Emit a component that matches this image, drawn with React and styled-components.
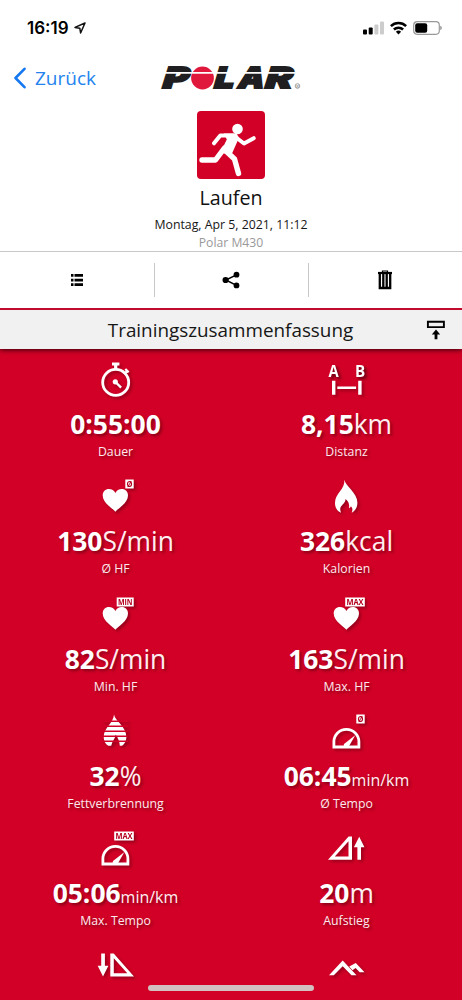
import React from 'react'
import styled, { createGlobalStyle } from 'styled-components'

const GlobalStyle = createGlobalStyle`
  * {
    box-sizing: border-box;
  }
  body {
    margin: 0;
    background-color: white;
    font-family: "Open Sans", "Noto Sans", sans-serif;
  }
  svg {
    display: block;
  }
`;

const Screen = styled.div`
  position: relative;
  width: 462px;
  height: 1000px;
  overflow: hidden;
  display: grid;
  grid-template-columns: 100%;
  grid-template-rows: 55px 46px 150px 57px 41px 1fr;
`;

const StatusBar = styled.div`
  padding: 0 20px 0 27px;
  display: flex;
  justify-content: space-between;
  align-items: center;
  .time{
    display: flex;
    align-items: center;
    gap: 5px;
    font-family: Inter, sans-serif;
    font-size: 17px;
    font-weight: 600;
    color: black;
  }
  .signals{
    display: flex;
    align-items: center;
    gap: 6px;
  }
`;

const NavBar = styled.div`
  padding: 0 13px;
  display: grid;
  grid-template-columns: 146px 144px 1fr;
  align-items: center;
`;

const BackButton = styled.button`
  display: flex;
  align-items: center;
  gap: 9px;
  padding: 0;
  border: none;
  background: none;
  font-family: inherit;
  font-size: 19px;
  line-height: 24px;
  color: #2483ee;
  cursor: pointer;
`;

const Activity = styled.div`
  padding-top: 10px;
  display: flex;
  flex-direction: column;
  align-items: center;
  .tile{
    width: 68px;
    height: 68px;
    border-radius: 4px;
    background-color: #d20026;
  }
  h1{
    margin: 5px 0 0;
    font-size: 19.7px;
    font-weight: 400;
    line-height: 28px;
    color: #111;
  }
  .date{
    margin-top: 4px;
    font-size: 12.3px;
    line-height: 18px;
    color: #161616;
  }
  .device{
    font-size: 12.2px;
    line-height: 18px;
    color: #999;
  }
`;

const Toolbar = styled.div`
  border-top: 1px solid #c8c8c8;
  display: grid;
  grid-template-columns: repeat(3, 1fr);
  align-items: center;
`;

const ToolButton = styled.button`
  height: 34px;
  padding: 0;
  padding-right: ${({ $divided }) => $divided ? "2px" : "0"};
  border: none;
  border-left: ${({ $divided }) => $divided ? "1px solid #c8c8c8" : "none"};
  background: none;
  display: flex;
  justify-content: center;
  align-items: center;
  cursor: pointer;
`;

const SectionHeader = styled.div`
  position: relative;
  padding: 0 16px 0 53px;
  border-top: 2px solid #c20a2c;
  background-color: #f1f1f1;
  box-shadow: 0 1px 5px rgba(0,0,0,0.75);
  clip-path: inset(0 0 -12px 0);
  display: grid;
  grid-template-columns: 1fr 38px;
  align-items: center;
  h2{
    margin: 0;
    font-size: 18.85px;
    font-weight: 400;
    line-height: 26px;
    text-align: center;
    color: #161616;
  }
  svg{
    justify-self: end;
  }
`;

const Summary = styled.div`
  min-height: 0;
  padding-top: 11px;
  background-color: #d20026;
  display: grid;
  grid-template-columns: 1fr 1fr;
  grid-auto-rows: 117.3px;
`;

const Cell = styled.div`
  display: flex;
  flex-direction: column;
  align-items: center;
  color: white;
  text-shadow: 2px 2px 3px rgba(0,0,0,0.35);
  svg{
    flex-shrink: 0;
    margin-right: 1px;
    overflow: visible;
    filter: drop-shadow(2px 2px 1.5px rgba(0,0,0,0.28));
  }
`;

const Value = styled.div`
  height: 36px;
  margin-top: 6px;
  font-size: 26.4px;
  line-height: 36px;
  font-weight: 700;
  white-space: nowrap;
  span{
    font-size: ${({ $small }) => $small ? "16px" : "26.4px"};
    line-height: 1;
    font-weight: 400;
    color: #ffeef0;
  }
`;

const Label = styled.div`
  font-size: 12.3px;
  line-height: 19px;
  color: #ffe9ec;
`;

const HomeIndicator = styled.div`
  position: absolute;
  left: 148px;
  bottom: 9px;
  width: 166px;
  height: 6px;
  border-radius: 3px;
  background-color: #d3c0c1;
`;

const Badge = ({ text, x = 32.3, width = 8.4 }) => (
  <g>
    <rect x={x} y="2.5" width={width} height="9" fill="#fff" />
    <text x={x + width / 2} y="10" fontSize="8" fontWeight="700" textAnchor="middle" fill="#b5001f"
      textLength={width - 2.4} lengthAdjust="spacingAndGlyphs" style={{ textShadow: "none" }}>{text}</text>
  </g>
)

const badges = {
  avg: <Badge text="Ø" />,
  min: <Badge text="MIN" x={23.7} width={17} />,
  max: <Badge text="MAX" x={21.2} width={19.6} />,
}

const flame = "M20.3 2.8C21.2 9 33.4 15.8 33.4 25.6c0 4.8-2.2 8.6-5.7 10.1 1.3-3.3.7-5-.8-6.4-.4 1.1-1 1.7-1.8 1.9.5-4.3-.7-7-3.6-9.2.1 4.900-5.300 5.900-5.300 10.300 0 1.300.400 2.400.900 3.400-3.800-1.400-6.100-5-6.100-9.600C11 16 21.400 12.500 20.300 2.800Z"

const icons = {
  duration: (
    <g fill="none" stroke="#fff">
      <circle cx="22.7" cy="22.4" r="13" strokeWidth="2.8" />
      <path d="M19 4h7.4M22.7 4v6" strokeWidth="3.2" />
      <path d="M31.2 14l3.400-3.400M32.300 9l3.300 3.300" strokeWidth="2.400" />
      <path d="M22.5 22l5.600 5.600" strokeWidth="2.400" />
      <circle cx="22.3" cy="21.800" r="2.600" fill="#fff" stroke="none" />
    </g>
  ),
  distance: (
    <g fill="#fff">
      <text x="9.6" y="17.4" fontSize="16" fontWeight="700" textAnchor="middle" textLength="10.2" lengthAdjust="spacingAndGlyphs">A</text>
      <text x="36.2" y="17.4" fontSize="16" fontWeight="700" textAnchor="middle" textLength="10.2" lengthAdjust="spacingAndGlyphs">B</text>
      <path d="M8 20.700h3.400v14H8zM34.200 20.700h3.400v14h-3.400zM13.300 26.500h18.800v2.600H13.300z" />
    </g>
  ),
  heart: (
    <path fill="#fff" d="M22.400 34.700C20 31.500 9.700 26 9.700 18.400c0-3.700 2.700-6.400 6.200-6.400 3 0 5.200 1.500 6.500 4 1.300-2.500 3.500-4 6.400-4 3.500 0 6.200 2.700 6.200 6.400 0 7.600-10.200 13.100-12.600 16.300Z" />
  ),
  calories: <path fill="#fff" d={flame} />,
  fat: (
    <g>
      <path fill="#fff" d="M21 2.400C22 9 33.400 14.500 33.400 25c0 4-1.800 7-4.300 8.800h-2.300c-.2-4-1.300-7-4.100-11-.8 4.500-3.600 6.500-4.500 11h-3C12.400 32 10.700 29 10.700 25 10.700 15.500 20.600 11 21 2.400Z" />
      <path stroke="#d20026" strokeWidth="1.600" d="M9 9.200h26M9 14.200h26M9 19.200h26M9 24.200h26M9 29.200h26" />
    </g>
  ),
  tempo: (
    <g>
      <path fill="none" stroke="#fff" strokeWidth="2.800" d="M9.900 35V29.700a12.500 12.300 0 0 1 25 0V35Z" />
      <path fill="#fff" d="M31.200 23.300L25.600 33.200q-.5 1.300-1.800 1.300h-4.300l.5-2.500 2.900-2.200Z" />
    </g>
  ),
  ascent: (
    <g fill="#fff">
      <path fillRule="evenodd" d="M4 30.800L24.600 7.500H28v23.300ZM10.800 27.600h13.700V12.200Z" />
      <path d="M35.200 7.800l5.300 10.400h-3.500v12.600h-3.600V18.200h-3.500Z" />
    </g>
  ),
  descent: (
    <g fill="#fff">
      <path fillRule="evenodd" d="M17.300 7.500h3.400l20.300 23.100H17.300ZM20.800 12.200v15.100h13.500Z" />
      <path d="M8.200 7.500h3.700v12.200h3.500L10 30.600 4.700 19.700h3.500Z" />
    </g>
  ),
  altitude: (
    <g fill="#fff">
      <path d="M5 29.200L18.700 14.500 32.500 29.200H27.500L18.700 20.200 9.800 29.200Z" />
      <path d="M25.200 20.600L31.800 17.100 40.500 26.200H35.700L31.600 21.900 28.500 24.200Z" />
    </g>
  ),
}

const metrics = [
  { icon: "duration", value: "0:55:00", label: "Dauer" },
  { icon: "distance", value: "8,15", unit: "km", label: "Distanz" },
  { icon: "heart", badge: "avg", value: "130", unit: "S/min", label: "Ø HF" },
  { icon: "calories", value: "326", unit: "kcal", label: "Kalorien" },
  { icon: "heart", badge: "min", value: "82", unit: "S/min", label: "Min. HF" },
  { icon: "heart", badge: "max", value: "163", unit: "S/min", label: "Max. HF" },
  { icon: "fat", value: "32", unit: "%", label: "Fettverbrennung" },
  { icon: "tempo", badge: "avg", value: "06:45", unit: "min/km", small: true, label: "Ø Tempo" },
  { icon: "tempo", badge: "max", value: "05:06", unit: "min/km", small: true, label: "Max. Tempo" },
  { icon: "ascent", value: "20", unit: "m", label: "Aufstieg" },
  { icon: "descent" },
  { icon: "altitude" },
]

// slanted wordmark, the red ball stands for the O
const Logo = () => (
  <svg width="144" height="40" viewBox="-2 -8 144 40">
    <g transform="skewX(-5)" fontFamily="Inter, sans-serif" fontSize="29" fontWeight="900" fontStyle="italic" fill="#1f1f21" stroke="#1f1f21" strokeWidth="1.8">
      <text x="3.4" y="22.4" textLength="26" lengthAdjust="spacingAndGlyphs">P</text>
      <text x="55" y="22.4" textLength="20" lengthAdjust="spacingAndGlyphs">L</text>
      <text x="79" y="22.4" textLength="26" lengthAdjust="spacingAndGlyphs">A</text>
      <text x="106" y="22.4" textLength="27" lengthAdjust="spacingAndGlyphs">R</text>
    </g>
    <circle cx="41.5" cy="12" r="11.4" fill="#e0183c" />
    <path stroke="#fff" strokeWidth="1.7" d="M0 6.900h134" />
    <circle cx="136.500" cy="20" r="2.300" fill="none" stroke="#777" strokeWidth="0.700" />
    <text x="136.500" y="21.500" fontSize="4" textAnchor="middle" fill="#666">R</text>
  </svg>
)

const Runner = () => (
  <svg width="68" height="68" viewBox="0 0 68 68">
    <circle cx="40.500" cy="18" r="5.300" fill="#fff" />
    <g fill="none" stroke="#fff" strokeLinecap="round" strokeLinejoin="round">
      <path strokeWidth="4" d="M17 32.300L23.300 24.500H36.500L47 32.500 56.700 27.200" />
      <path strokeWidth="5.400" d="M5 49H18.500L27.500 37M30 41L37.500 48 41.500 62.500" />
    </g>
    <path fill="#fff" d="M27 22.600h12.500l2.500 4.200-8.100 18.200-10.300-4 6.200-12.500Z" />
  </svg>
)

const App = () => {
  return (
    <Screen>
      <GlobalStyle />
      <StatusBar>
        <div className="time">
          16:19
          <svg width="12" height="12" viewBox="0 0 12 12" fill="none" stroke="#111" strokeWidth="1.500" strokeLinejoin="round">
            <path d="M11 1L1 5.400 5.800 6.200 6.600 11Z" />
          </svg>
        </div>
        <div className="signals">
          <svg width="21" height="14" viewBox="0 0 21 14">
            <rect x="0" y="8.500" width="4" height="5" rx="1" />
            <rect x="5.700" y="6.500" width="4" height="7" rx="1" />
            <rect x="11.400" y="3.500" width="4" height="10" rx="1" fill="#ccc" />
            <rect x="17" y="0.500" width="4" height="13" rx="1" fill="#ccc" />
          </svg>
          <svg width="17" height="14" viewBox="0 0 17 14" fill="none" stroke="#000" strokeWidth="2.500">
            <path d="M0.900 5.200a10.900 10.900 0 0 1 15.200 0M3.900 8.500a6.600 6.600 0 0 1 9.200 0" />
            <path d="M8.500 13.400L5.900 10.800a3.800 3.800 0 0 1 5.200 0Z" fill="#000" stroke="none" />
          </svg>
          <svg width="29" height="14" viewBox="0 0 29 14">
            <rect x="0.700" y="0.700" width="25.600" height="12.600" rx="3.500" fill="none" stroke="#999" strokeWidth="1.200" />
            <rect x="2.200" y="2.200" width="12" height="9.600" rx="2" />
            <path d="M27.200 4.800q1.700.600 1.700 2.200t-1.700 2.200Z" fill="#999" />
          </svg>
        </div>
      </StatusBar>
      <NavBar>
        <BackButton>
          <svg width="13" height="22" viewBox="0 0 13 22" fill="none" stroke="#1578f0" strokeWidth="2.600" strokeLinecap="round" strokeLinejoin="round">
            <path d="M11.500 1.800L2.500 11l9 9.200" />
          </svg>
          Zurück
        </BackButton>
        <Logo />
      </NavBar>
      <Activity>
        <div className="tile"><Runner /></div>
        <h1>Laufen</h1>
        <div className="date">Montag, Apr 5, 2021, 11:12</div>
        <div className="device">Polar M430</div>
      </Activity>
      <Toolbar>
        <ToolButton>
          <svg width="12" height="12" viewBox="0 0 12 12">
            <path d="M0 0h2.500v2.800H0zM3.500 0H12v2.800H3.500zM0 4.700h2.500v2.700H0zM3.500 4.700H12v2.700H3.500zM0 9.200h2.500V12H0zM3.500 9.200H12V12H3.500z" />
          </svg>
        </ToolButton>
        <ToolButton $divided>
          <svg width="18" height="18" viewBox="0 0 18 18">
            <path d="M14.500 3.800L3.800 9l10.700 5.300" fill="none" stroke="#000" strokeWidth="1.500" />
            <circle cx="3.600" cy="9" r="3.100" />
            <circle cx="14.500" cy="3.700" r="2.900" />
            <circle cx="14.500" cy="14.400" r="2.900" />
          </svg>
        </ToolButton>
        <ToolButton $divided>
          <svg width="14" height="20" viewBox="0 0 14 20" fill="none" stroke="#000">
            <path d="M4.500 2.500V1h5v1.500" strokeWidth="1.200" />
            <path d="M0 3h14" strokeWidth="2.200" />
            <path d="M1.800 3.500v14.500h10.400V3.500M5.300 4v13.500M8.700 4v13.500" strokeWidth="2.300" />
          </svg>
        </ToolButton>
      </Toolbar>
      <SectionHeader>
        <h2>Trainingszusammenfassung</h2>
        <svg width="20" height="20" viewBox="0 0 20 20">
          <path d="M1.900 1.800h16v5.300h-16z" fill="none" stroke="#000" strokeWidth="1.900" />
          <path d="M10 9.600l4.200 4.800h-2.800v4.800H8.600v-4.800H5.800Z" />
        </svg>
      </SectionHeader>
      <Summary>
        {metrics.map((m, i) => (
          <Cell key={i}>
            <svg width="44" height="40" viewBox="0 0 44 40">
              {icons[m.icon]}
              {m.badge && badges[m.badge]}
            </svg>
            {m.value && <Value $small={m.small}>{m.value}{m.unit && <span>{m.unit}</span>}</Value>}
            {m.label && <Label>{m.label}</Label>}
          </Cell>
        ))}
      </Summary>
      <HomeIndicator />
    </Screen>
  )
}

export default App
